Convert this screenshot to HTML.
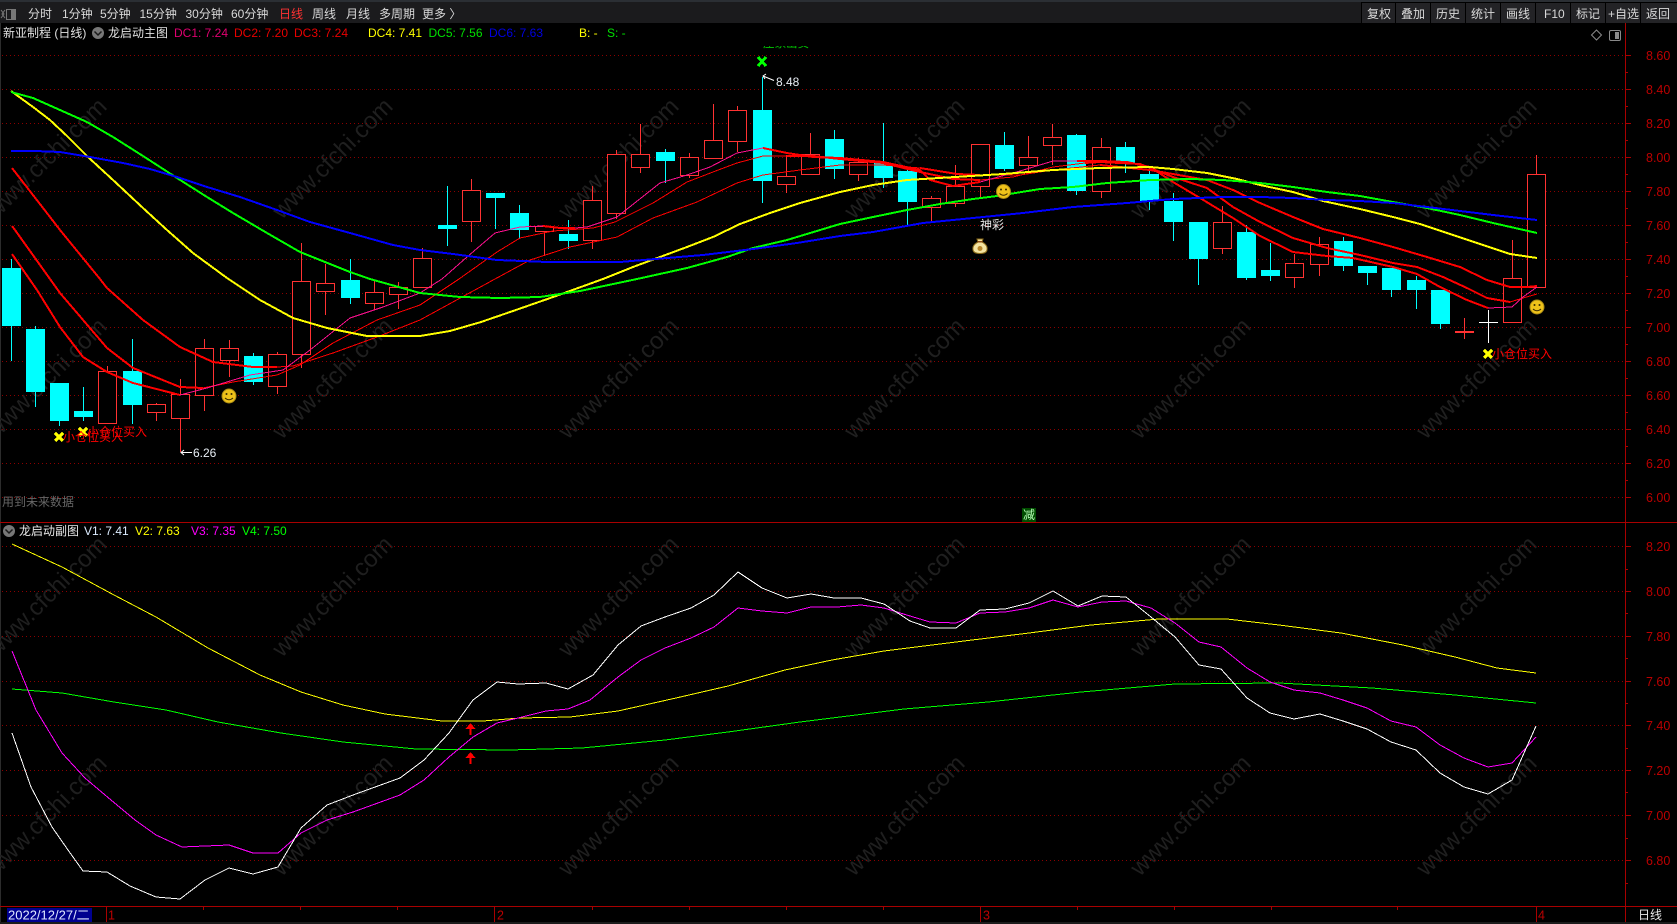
<!DOCTYPE html>
<html lang="zh-CN"><head><meta charset="utf-8"><title>K线</title>
<style>
html,body{margin:0;padding:0;background:#000;width:1677px;height:924px;overflow:hidden}
svg{display:block;position:absolute;left:0;top:0}
text{font-family:"Liberation Sans","Noto Sans CJK SC",sans-serif;font-size:12px}
.w{font-size:24px;fill:#1f1f1f}
.ax{font-size:12.5px;fill:#bb0000}
.clip{position:absolute;left:763px;top:46px;width:50px;height:6px;overflow:hidden}
.clip span{position:absolute;left:0;top:-8px;font:11.5px/12px "Liberation Sans","Noto Sans CJK SC",sans-serif;color:#00c800;white-space:nowrap}
</style></head><body>
<svg width="1677" height="924" viewBox="0 0 1677 924" xmlns="http://www.w3.org/2000/svg">
<rect width="1677" height="924" fill="#000"/>
<rect x="0" y="0" width="1" height="924" fill="#2c2c2c"/>

<!-- watermark -->
<g class="wm">
<text class="w" text-anchor="middle" transform="translate(52 164) rotate(-45)">www.cfchi.com</text>
<text class="w" text-anchor="middle" transform="translate(338 164) rotate(-45)">www.cfchi.com</text>
<text class="w" text-anchor="middle" transform="translate(624 164) rotate(-45)">www.cfchi.com</text>
<text class="w" text-anchor="middle" transform="translate(910 164) rotate(-45)">www.cfchi.com</text>
<text class="w" text-anchor="middle" transform="translate(1196 164) rotate(-45)">www.cfchi.com</text>
<text class="w" text-anchor="middle" transform="translate(1482 164) rotate(-45)">www.cfchi.com</text>
<text class="w" text-anchor="middle" transform="translate(52 384) rotate(-45)">www.cfchi.com</text>
<text class="w" text-anchor="middle" transform="translate(338 384) rotate(-45)">www.cfchi.com</text>
<text class="w" text-anchor="middle" transform="translate(624 384) rotate(-45)">www.cfchi.com</text>
<text class="w" text-anchor="middle" transform="translate(910 384) rotate(-45)">www.cfchi.com</text>
<text class="w" text-anchor="middle" transform="translate(1196 384) rotate(-45)">www.cfchi.com</text>
<text class="w" text-anchor="middle" transform="translate(1482 384) rotate(-45)">www.cfchi.com</text>
<text class="w" text-anchor="middle" transform="translate(52 602) rotate(-45)">www.cfchi.com</text>
<text class="w" text-anchor="middle" transform="translate(338 602) rotate(-45)">www.cfchi.com</text>
<text class="w" text-anchor="middle" transform="translate(624 602) rotate(-45)">www.cfchi.com</text>
<text class="w" text-anchor="middle" transform="translate(910 602) rotate(-45)">www.cfchi.com</text>
<text class="w" text-anchor="middle" transform="translate(1196 602) rotate(-45)">www.cfchi.com</text>
<text class="w" text-anchor="middle" transform="translate(1482 602) rotate(-45)">www.cfchi.com</text>
<text class="w" text-anchor="middle" transform="translate(52 821) rotate(-45)">www.cfchi.com</text>
<text class="w" text-anchor="middle" transform="translate(338 821) rotate(-45)">www.cfchi.com</text>
<text class="w" text-anchor="middle" transform="translate(624 821) rotate(-45)">www.cfchi.com</text>
<text class="w" text-anchor="middle" transform="translate(910 821) rotate(-45)">www.cfchi.com</text>
<text class="w" text-anchor="middle" transform="translate(1196 821) rotate(-45)">www.cfchi.com</text>
<text class="w" text-anchor="middle" transform="translate(1482 821) rotate(-45)">www.cfchi.com</text>
</g>

<!-- grid -->
<path d="M2 55.5H1625M2 89.5H1625M2 123.5H1625M2 157.5H1625M2 191.5H1625M2 225.5H1625M2 259.5H1625M2 293.5H1625M2 327.5H1625M2 361.5H1625M2 395.5H1625M2 429.5H1625M2 463.5H1625M2 497.5H1625M2 546.5H1625M2 591.5H1625M2 636.5H1625M2 681.5H1625M2 725.5H1625M2 770.5H1625M2 815.5H1625M2 860.5H1625" stroke="#8c0000" stroke-width="1" stroke-dasharray="1 3" fill="none" shape-rendering="crispEdges"/>

<!-- cyan candles -->
<g shape-rendering="crispEdges">
<path fill="none" stroke="#00ffff" d="M11.5 259V361M35.5 326V407M59.5 383V426M83.5 387V421M132.5 339V424M253.5 353V385M350.5 259V304M447.5 186V246M495.5 193V229M519.5 205V239M568.5 220V249M665.5 149V183M762.5 77V203M834.5 130V179M883.5 123V188M907.5 168V225M1004.5 132V171M1076.5 134V195M1125.5 142V173M1149.5 168V210M1173.5 193V241M1198.5 222V285M1246.5 225V280M1270.5 243V281M1343.5 237V271M1367.5 266V285M1391.5 268V297M1416.5 276V309M1440.5 290V329"/>
<path fill="#00ffff" d="M2 268h19v58H2zM26 329h19v63H26zM50 383h19v38H50zM74 411h19v6H74zM123 371h19v34h-19zM244 356h19v26h-19zM341 280h19v18h-19zM438 225h19v4h-19zM486 193h19v5h-19zM510 213h19v17h-19zM559 234h19v7h-19zM656 152h19v9h-19zM753 110h19v71h-19zM825 139h19v30h-19zM874 163h19v15h-19zM898 171h19v31h-19zM995 145h19v24h-19zM1067 135h19v56h-19zM1116 147h19v17h-19zM1140 174h19v27h-19zM1164 201h19v21h-19zM1189 222h19v37h-19zM1237 232h19v46h-19zM1261 270h19v6h-19zM1334 241h19v25h-19zM1358 266h19v7h-19zM1382 268h19v22h-19zM1407 280h19v10h-19zM1431 290h19v34h-19z"/>
<!-- red candles -->
<path fill="none" stroke="#ff3232" d="M107.5 366V371M156.5 403V405M156.5 413V421M180.5 379V394M180.5 418V452M204.5 339V348M204.5 395V411M229.5 340V348M229.5 360V377M277.5 352V354M277.5 386V394M301.5 243V281M301.5 354V368M325.5 264V283M325.5 291V315M374.5 280V292M374.5 303V310M398.5 282V287M398.5 294V309M422.5 248V258M471.5 179V190M471.5 221V242M544.5 231V256M592.5 186V200M592.5 240V249M616.5 150V154M616.5 213V219M640.5 124V154M640.5 167V173M689.5 153V157M689.5 175V178M713.5 104V140M737.5 106V110M737.5 141V152M786.5 155V176M786.5 184V193M810.5 133V154M858.5 158V162M858.5 174V181M931.5 196V198M931.5 207V222M955.5 165V186M955.5 203V207M980.5 186V198M1028.5 136V157M1028.5 165V171M1052.5 124V137M1052.5 145V165M1101.5 138V147M1101.5 191V198M1222.5 206V222M1222.5 248V254M1294.5 254V263M1294.5 277V288M1319.5 237V244M1319.5 264V276M1512.5 240V278M1536.5 155V174M1464.5 318V339"/>
<path fill="#000" stroke="#ff3232" d="M98.5 371.5h18v52h-18zM147.5 404.5h18v8h-18zM171.5 394.5h18v24h-18zM195.5 348.5h18v47h-18zM220.5 348.5h18v12h-18zM268.5 354.5h18v32h-18zM292.5 281.5h18v73h-18zM316.5 283.5h18v8h-18zM365.5 292.5h18v11h-18zM389.5 287.5h18v7h-18zM413.5 258.5h18v29h-18zM462.5 190.5h18v31h-18zM535.5 226.5h18v5h-18zM583.5 200.5h18v40h-18zM607.5 154.5h18v59h-18zM631.5 154.5h18v13h-18zM680.5 157.5h18v18h-18zM704.5 140.5h18v18h-18zM728.5 110.5h18v31h-18zM777.5 176.5h18v8h-18zM801.5 154.5h18v20h-18zM849.5 162.5h18v12h-18zM922.5 198.5h18v9h-18zM946.5 186.5h18v17h-18zM971.5 144.5h18v42h-18zM1019.5 157.5h18v8h-18zM1043.5 137.5h18v8h-18zM1092.5 147.5h18v44h-18zM1213.5 222.5h18v26h-18zM1285.5 263.5h18v14h-18zM1310.5 244.5h18v20h-18zM1503.5 278.5h18v44h-18zM1527.5 174.5h18v113h-18z"/>
<rect x="1455" y="331" width="19" height="2" fill="#ff3232"/>
<path d="M1488.5 310V343M1479 322.5h19" fill="none" stroke="#fff"/>
</g>

<!-- main indicator lines -->
<g fill="none" stroke-linejoin="round" shape-rendering="crispEdges">
<g stroke="#ff0000" stroke-width="1">
<polyline points="203,388 233,382 277,375 300,365 333,343 377,320 420,305 459,279 497,252 520,238 553,231 593,228 615,222 653,203 687,182 713,172 737,163 763,156 787,156"/>
<polyline points="980,180 1013,177 1053,167 1085,163"/>
<polyline points="1510,302 1523,298 1537,294"/>
<polyline points="277,367 293,366 333,353 377,337 420,320 495,279 530,260 570,247 617,237 653,218 697,202 737,183 763,175 800,170 840,165 883,165 920,168"/>
<polyline points="980,175 1020,175 1053,170 1100,165"/>
</g>
<g stroke="#ff1090" stroke-width="1">
<polyline points="180,395 207,388 250,375 283,370 310,350 350,318 383,307 420,293 442,279 467,257 495,233 520,227 543,226"/>
<polyline points="575,228 587,227 617,217 660,183 687,175 710,167 737,153 763,148"/>
<polyline points="980,182 1020,171 1053,161 1077,161"/>
<polyline points="1488,308 1512,307 1523,297 1537,287"/>
</g>
<g stroke="#ff0000" stroke-width="2">
<polyline points="12,254 37,290 60,327 83,357 107,372 133,383 180,395"/>
<polyline points="543,226 560,228 575,228"/>
<polyline points="763,148 787,153 813,157 840,158 883,162 920,170 930,180 953,186 980,182"/>
<polyline points="1077,161 1100,161 1127,162 1150,167 1173,182 1200,198 1233,218 1260,236 1293,252 1327,256 1353,258 1393,267 1417,274 1440,287 1467,300 1488,308"/>
<polyline points="12,226 15,230 60,293 107,348 133,368 180,387 203,388"/>
<polyline points="787,156 813,156 840,159 883,163 920,172 953,179 980,180"/>
<polyline points="1085,163 1100,162 1140,164 1173,177 1207,188 1233,207 1260,222 1293,238 1327,248 1360,255 1393,263 1417,267 1443,277 1467,288 1487,298 1510,302"/>
<polyline points="12,168 50,217 60,230 100,279 107,288 143,320 180,347 213,362 253,367 277,367"/>
<polyline points="920,168 957,174 980,175"/>
<polyline points="1100,165 1150,170 1207,180 1233,190 1260,203 1293,217 1323,229 1360,238 1393,247 1427,257 1460,267 1487,280 1510,287 1527,287 1537,286"/>
</g>
<polyline stroke="#ffff00" stroke-width="2" points="11,91 33,107 50,120 67,136 88,157 113,180 143,208 167,230 193,253 227,278 260,300 293,318 327,328 367,336 420,336 450,331 481,322 513,311 556,296 603,279 633,267 660,257 687,247 713,237 740,224 770,213 800,203 840,192 873,185 907,180 955,177 1003,174 1053,170 1100,168 1150,167 1173,169 1207,173 1237,179 1260,185 1293,192 1323,201 1360,209 1393,217 1420,224 1447,233 1477,243 1510,254 1537,258"/>
<polyline stroke="#00ff00" stroke-width="2" points="11,92 33,98 60,110 87,122 113,137 143,156 177,178 207,197 233,213 267,233 300,252 350,272 370,279 420,293 460,297 500,298 540,297 580,291 637,279 687,268 727,257 753,248 787,240 840,224 873,217 907,210 940,204 973,199 997,196 1040,189 1073,187 1107,183 1150,180 1190,179 1223,180 1260,183 1293,187 1327,192 1360,196 1393,202 1427,208 1460,215 1493,223 1537,233"/>
<polyline stroke="#0000ff" stroke-width="2" points="11,151 35,151 60,152 90,157 123,163 150,169 177,177 207,187 240,197 277,210 310,222 350,233 393,245 420,250 453,254 497,260 547,262 620,262 667,258 703,255 753,249 797,243 840,236 873,232 923,223 973,218 1023,213 1073,207 1127,203 1173,199 1223,197 1260,197 1293,198 1327,200 1360,201 1393,203 1427,207 1460,211 1493,215 1537,220"/>
</g>

<!-- main chart markers -->
<g fill="none" stroke="#ffff00" stroke-width="3" shape-rendering="crispEdges">
<path d="M55 433l8 8M63 433l-8 8"/>
<path d="M79 428l8 8M87 428l-8 8"/>
<path d="M1484 350l8 8M1492 350l-8 8"/>
</g>
<path d="M758 57l8 9M766 57l-8 9" fill="none" stroke="#00ff00" stroke-width="3" shape-rendering="crispEdges"/>
<text x="63" y="441" fill="#ff0000">小仓位买入</text>
<text x="87" y="436" fill="#ff0000">小仓位买入</text>
<text x="1492" y="358" fill="#ff0000">小仓位买入</text>

<path d="M192 452.5H181M184 450l-3 2.5 3 2.5" fill="none" stroke="#fff"/>
<text x="193" y="457" fill="#e8eef5">6.26</text>
<path d="M774 80.5L763 76M766 74l-3 2 2 3" fill="none" stroke="#fff"/>
<text x="776" y="86" fill="#e8eef5">8.48</text>

<g id="s1">
<circle cx="229" cy="396" r="7" fill="#eec21a" stroke="#a98a14"/>
<circle cx="226.5" cy="394" r="1" fill="#3a2c00"/><circle cx="231.5" cy="394" r="1" fill="#3a2c00"/>
<path d="M225 398q4 3.500 8 0" fill="none" stroke="#3a2c00" stroke-width="1"/>
</g>
<g>
<circle cx="1003.500" cy="191.500" r="7" fill="#eec21a" stroke="#a98a14"/>
<circle cx="1001" cy="189.500" r="1" fill="#3a2c00"/><circle cx="1006" cy="189.500" r="1" fill="#3a2c00"/>
<path d="M999.500 193.500q4 3.500 8 0" fill="none" stroke="#3a2c00" stroke-width="1"/>
</g>
<g>
<circle cx="1537" cy="307" r="7" fill="#eec21a" stroke="#a98a14"/>
<circle cx="1534.500" cy="305" r="1" fill="#3a2c00"/><circle cx="1539.500" cy="305" r="1" fill="#3a2c00"/>
<path d="M1533 309q4 3.500 8 0" fill="none" stroke="#3a2c00" stroke-width="1"/>
</g>

<text x="980" y="229" fill="#e8e8e8">神彩</text>
<path d="M977 239h6l-1 3q6 3 5 8-.5 3.500-7 3.500t-7-3.500q-1-5 5-8z" fill="#f3e3a0" stroke="#8a6a18" stroke-width="1"/>
<rect x="977.500" y="241" width="5" height="1.500" fill="#8a4a10"/>
<circle cx="980" cy="248.500" r="2.500" fill="#b8862a"/>

<rect x="1022" y="508" width="14" height="14" fill="#004d00"/>
<text x="1023" y="519" fill="#b8ffb8" style="font-size:12px">减</text>
<text x="2" y="506" fill="#666">用到未来数据</text>

<!-- sub chart lines -->
<g fill="none" stroke-width="1" stroke-linejoin="round" shape-rendering="crispEdges">
<polyline stroke="#ffff00" points="12,544 62,567 114,595 156,617 208,648 260,675 301,692 343,705 385,714 442,721 483,721 520,718 570,717 618,711 676,698 728,686 785,670 832,660 884,651 956,642 1029,633 1091,625 1159,619 1227,619 1279,625 1341,633 1403,645 1455,657 1497,668 1536,673"/>
<polyline stroke="#00ff00" points="12,689 62,693 114,702 166,710 218,722 281,733 343,742 416,749 509,750 582,748 665,740 728,732 800,722 904,709 988,702 1081,692 1175,684 1279,683 1372,688 1455,695 1536,703"/>
<polyline stroke="#ff00ff" points="12,651 36,710 62,753 85,778 111,800 135,820 156,835 182,847 205,846 229,845 253,853 278,853 301,833 327,820 353,812 400,795 424,780 449,757 473,737 497,723 518,718 546,711 568,709 590,700 618,677 641,660 665,648 691,638 714,627 738,608 762,611 787,613 811,607 837,607 861,605 884,608 910,616 930,622 956,623 980,613 1005,612 1029,608 1053,600 1078,607 1102,602 1126,601 1151,608 1175,623 1199,642 1221,647 1247,668 1270,682 1294,690 1320,693 1343,700 1367,708 1391,721 1416,727 1440,745 1464,758 1488,767 1512,763 1536,737"/>
<polyline stroke="#ffffff" points="12,733 31,787 52,827 68,850 83,871 107,872 130,886 156,897 180,899 205,880 229,868 253,874 278,867 301,828 327,805 353,795 400,778 424,760 449,733 473,700 497,682 518,684 546,683 568,689 593,675 618,645 641,626 665,617 691,608 714,595 738,572 762,588 787,598 811,594 834,598 861,598 884,604 910,621 930,628 956,628 980,610 1005,609 1029,603 1053,591 1078,606 1102,596 1126,597 1151,617 1175,637 1199,665 1221,669 1247,698 1270,713 1294,719 1320,714 1343,721 1367,729 1391,742 1416,750 1440,773 1464,787 1488,794 1512,780 1536,726"/>
</g>
<path d="M470.500 723l5 6h-4v6h-2v-6h-4zM470.500 752l5 6h-4v6h-2v-6h-4z" fill="#ff0000" shape-rendering="crispEdges"/>

<!-- axes -->
<g shape-rendering="crispEdges">
<rect x="1625" y="23" width="1" height="899" fill="#a80000"/>
<rect x="0" y="522" width="1677" height="1" fill="#a80000"/>
<rect x="0" y="906" width="1677" height="1" fill="#a80000"/>
<path d="M1625 55.500h6M1625 89.500h6M1625 123.500h6M1625 157.500h6M1625 191.500h6M1625 225.500h6M1625 259.500h6M1625 293.500h6M1625 327.500h6M1625 361.500h6M1625 395.500h6M1625 429.500h6M1625 463.500h6M1625 497.500h6M1625 72.500h3M1625 106.500h3M1625 140.500h3M1625 174.500h3M1625 208.500h3M1625 242.500h3M1625 276.500h3M1625 310.500h3M1625 344.500h3M1625 378.500h3M1625 412.500h3M1625 446.500h3M1625 480.500h3M1625 546.500h6M1625 591.500h6M1625 636.500h6M1625 681.500h6M1625 725.500h6M1625 770.500h6M1625 815.500h6M1625 860.500h6M1625 569.500h3M1625 613.500h3M1625 658.500h3M1625 703.500h3M1625 748.500h3M1625 792.500h3M1625 838.500h3M1625 883.500h3" stroke="#a80000" fill="none"/>
<path d="M106.500 907v15M494.500 907v15M980.500 907v15M1536.500 907v15M203.500 907v3M300.500 907v3M397.500 907v3M592.500 907v3M689.500 907v3M786.500 907v3M883.500 907v3M1077.500 907v3M1174.500 907v3M1271.500 907v3M1397.500 907v3" stroke="#a80000" fill="none"/>
</g>
<g class="axl">
<text class="ax" x="1646" y="60">8.60</text><text class="ax" x="1646" y="94">8.40</text><text class="ax" x="1646" y="128">8.20</text><text class="ax" x="1646" y="162">8.00</text><text class="ax" x="1646" y="196">7.80</text><text class="ax" x="1646" y="230">7.60</text><text class="ax" x="1646" y="264">7.40</text><text class="ax" x="1646" y="298">7.20</text><text class="ax" x="1646" y="332">7.00</text><text class="ax" x="1646" y="366">6.80</text><text class="ax" x="1646" y="400">6.60</text><text class="ax" x="1646" y="434">6.40</text><text class="ax" x="1646" y="468">6.20</text><text class="ax" x="1646" y="502">6.00</text>
<text class="ax" x="1646" y="551">8.20</text><text class="ax" x="1646" y="596">8.00</text><text class="ax" x="1646" y="641">7.80</text><text class="ax" x="1646" y="686">7.60</text><text class="ax" x="1646" y="730">7.40</text><text class="ax" x="1646" y="775">7.20</text><text class="ax" x="1646" y="820">7.00</text><text class="ax" x="1646" y="865">6.80</text>
</g>

<!-- bottom axis -->
<rect x="7" y="908" width="85" height="14" fill="#000090"/>
<text x="8" y="919.500" fill="#dfe8ff" style="font-size:13px">2022/12/27/二</text>
<text x="108" y="919.500" class="ax">1</text>
<text x="497" y="919.500" class="ax">2</text>
<text x="983" y="919.500" class="ax">3</text>
<text x="1538" y="919.500" class="ax">4</text>
<text x="1638" y="919" fill="#e8e8e8">日线</text>
<rect x="0" y="922" width="1677" height="2" fill="#1c1c1c"/>

<!-- sub title -->
<circle cx="9" cy="531" r="6" fill="#777"/><path d="M5.500 529.500L9 533l3.500-3.500" fill="none" stroke="#1a1a1a" stroke-width="1.500"/>
<text x="19" y="535" fill="#e8e8e8">龙启动副图</text>
<text x="84" y="535" fill="#dcecff">V1: 7.41</text>
<text x="135" y="535" fill="#ffff00">V2: 7.63</text>
<text x="191" y="535" fill="#ff00ff">V3: 7.35</text>
<text x="242" y="535" fill="#00ff00">V4: 7.50</text>

<!-- title row -->
<text x="3" y="37" fill="#e0e0e0">新亚制程 (日线)</text>
<circle cx="98" cy="33" r="6" fill="#777"/><path d="M94.500 31.500L98 35l3.500-3.500" fill="none" stroke="#1a1a1a" stroke-width="1.500"/>
<text x="108" y="37" fill="#e0e0e0">龙启动主图</text>
<text x="174" y="37" fill="#e00070">DC1: 7.24</text>
<text x="234" y="37" fill="#e80000">DC2: 7.20</text>
<text x="294" y="37" fill="#e80000">DC3: 7.24</text>
<text x="368" y="37" fill="#ffff00">DC4: 7.41</text>
<text x="428.500" y="37" fill="#00e000">DC5: 7.56</text>
<text x="489" y="37" fill="#0000e0">DC6: 7.63</text>
<text x="579" y="37" fill="#ffff00">B: -</text>
<text x="607" y="37" fill="#00e000">S: -</text>
<path d="M1596.500 30l5 5-5 5-5-5z" fill="none" stroke="#8a8a8a"/>
<rect x="1609.500" y="30.500" width="11" height="10" rx="1.500" fill="none" stroke="#8a8a8a"/><rect x="1615" y="32" width="4" height="7" fill="#8a8a8a"/>

<!-- toolbar -->
<rect x="0" y="0" width="1677" height="23" fill="#1b1b1d"/>
<rect x="0" y="0" width="1677" height="2" fill="#2b2f34"/>
<g shape-rendering="crispEdges">
<rect x="1361" y="2" width="316" height="21" fill="#000"/>
<rect x="1362" y="3" width="33" height="20" fill="#232326"/><rect x="1396" y="3" width="34" height="20" fill="#232326"/><rect x="1431" y="3" width="34" height="20" fill="#232326"/><rect x="1466" y="3" width="34" height="20" fill="#232326"/><rect x="1501" y="3" width="34" height="20" fill="#232326"/><rect x="1536" y="3" width="34" height="20" fill="#232326"/><rect x="1571" y="3" width="34" height="20" fill="#232326"/><rect x="1606" y="3" width="34" height="20" fill="#232326"/><rect x="1641" y="3" width="36" height="20" fill="#232326"/>
</g>
<rect x="6.500" y="9.500" width="9" height="10" fill="none" stroke="#777"/><rect x="11" y="10" width="4" height="9" fill="#777"/>
<path d="M1 10l3 4-3 4M5 10l-3 4 3 4" fill="none" stroke="#777"/>
<g fill="#d9d9d9">
<text x="28" y="18">分时</text>
<text x="62" y="18">1分钟</text>
<text x="100" y="18">5分钟</text>
<text x="139.500" y="18">15分钟</text>
<text x="185.500" y="18">30分钟</text>
<text x="231" y="18">60分钟</text>
<text x="279" y="18" fill="#ff3232">日线</text>
<text x="312" y="18">周线</text>
<text x="346" y="18">月线</text>
<text x="379" y="18">多周期</text>
<text x="422" y="18">更多 〉</text>
<text x="1367" y="18">复权</text>
<text x="1401" y="18">叠加</text>
<text x="1436" y="18">历史</text>
<text x="1471" y="18">统计</text>
<text x="1506" y="18">画线</text>
<text x="1544" y="18">F10</text>
<text x="1576" y="18">标记</text>
<text x="1608" y="18">+自选</text>
<text x="1646" y="18">返回</text>
</g>
</svg>
<div class="clip"><span>庄家出货</span></div>
</body></html>
